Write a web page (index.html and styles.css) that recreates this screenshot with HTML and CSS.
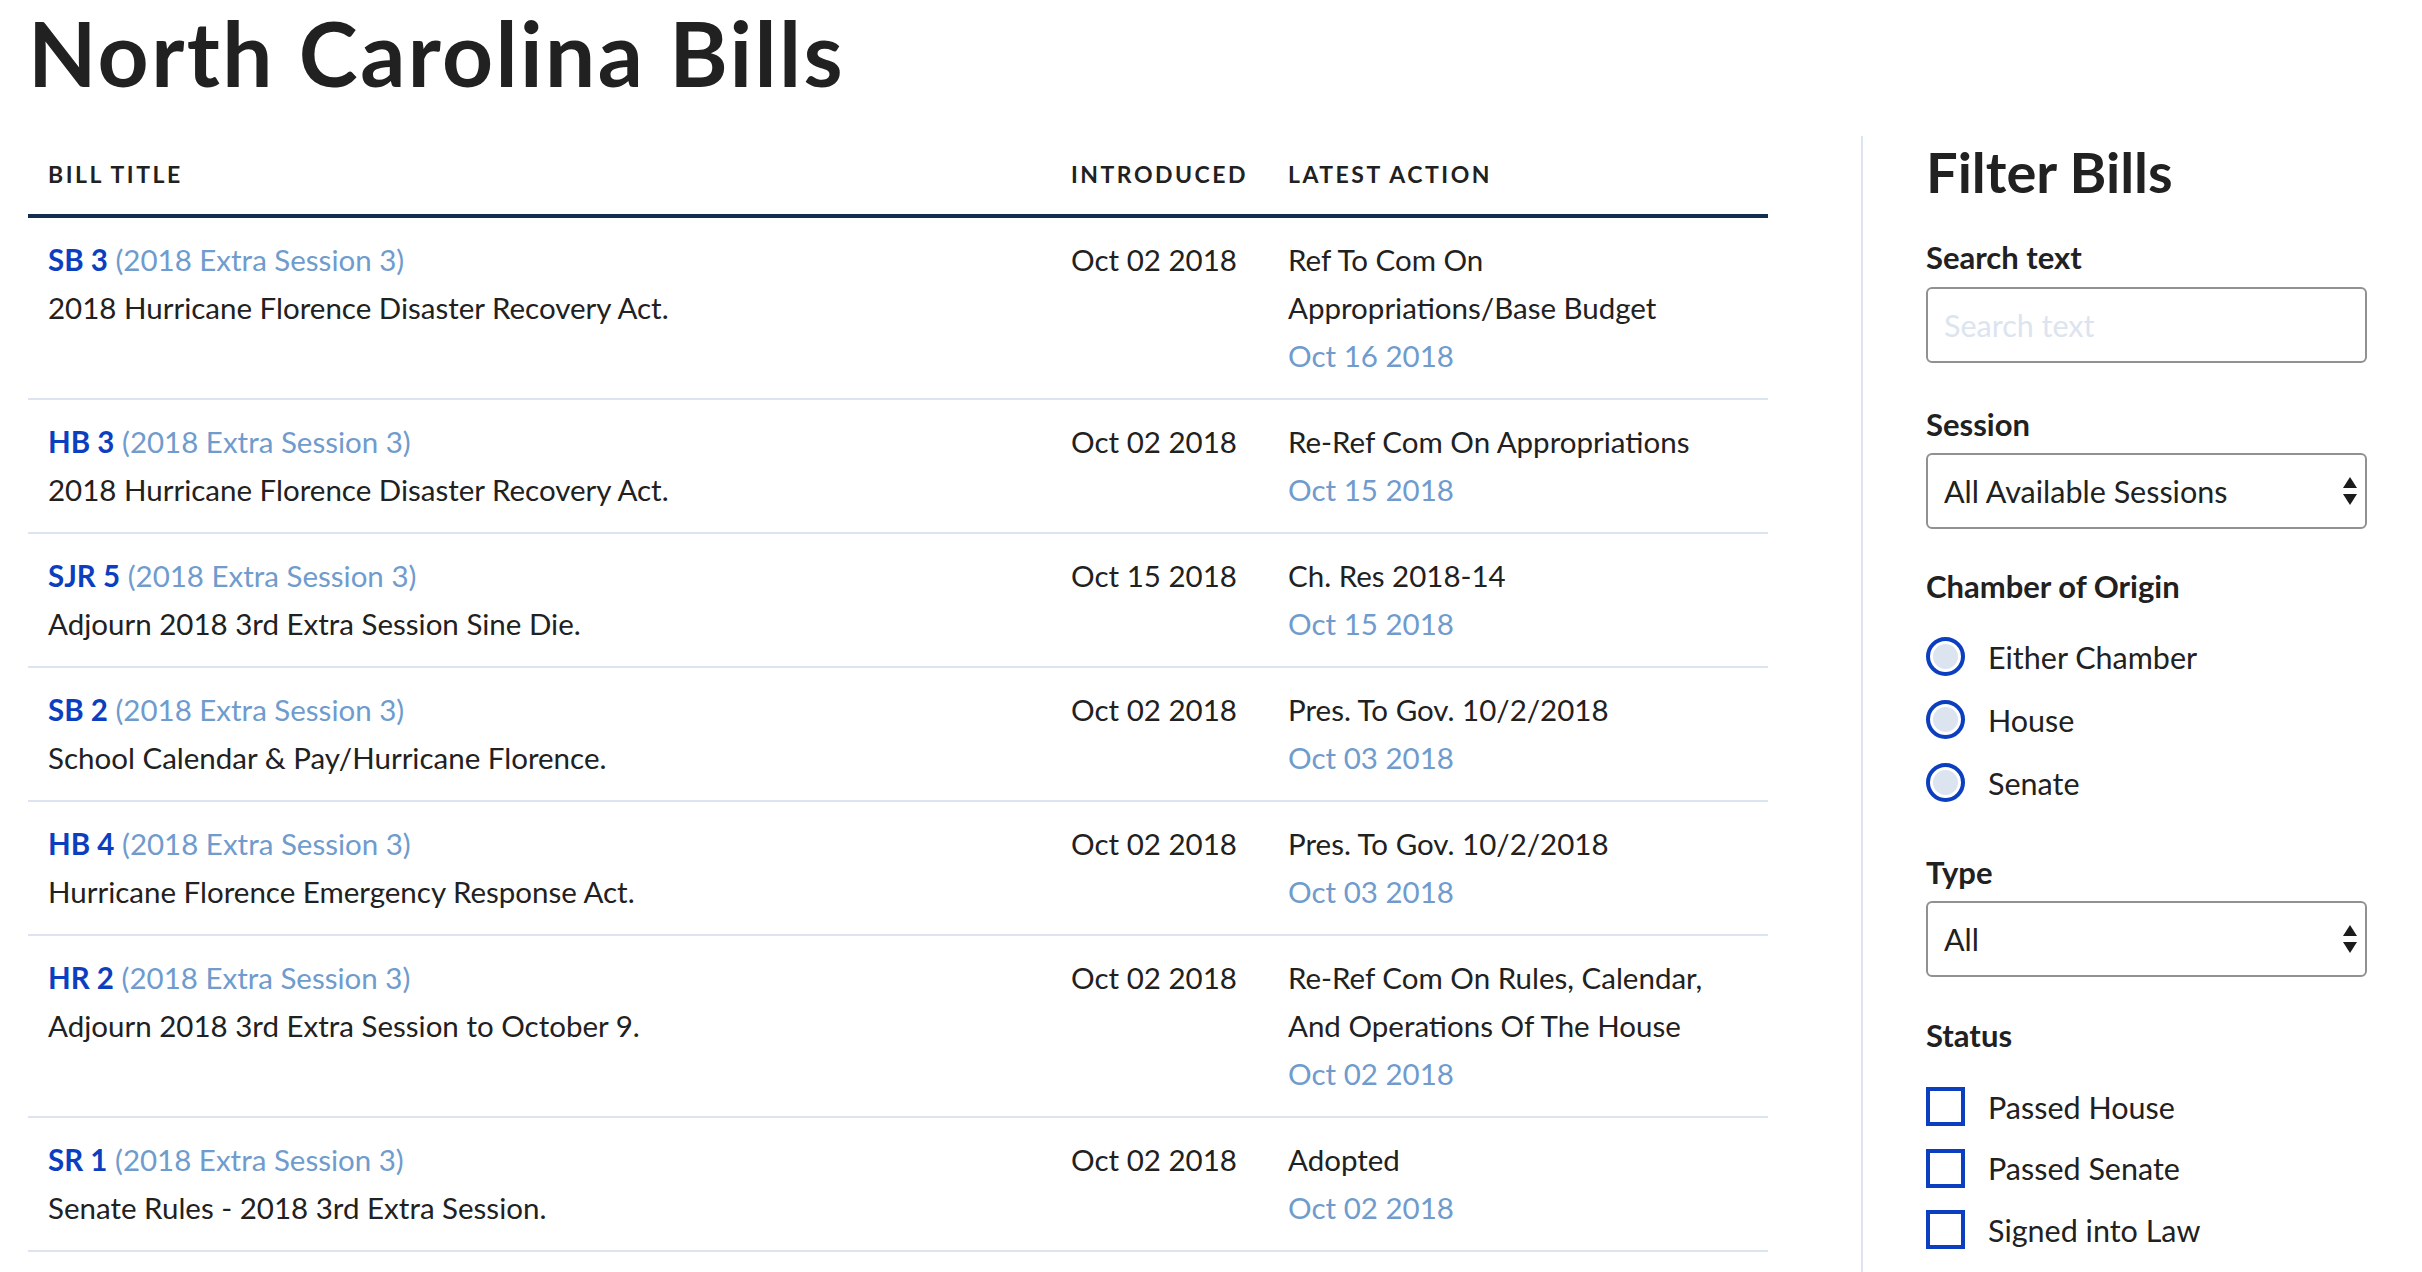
FILE: index.html
```html
<!DOCTYPE html>
<html lang="en">
<head>
<meta charset="utf-8">
<title>North Carolina Bills</title>
<link rel="stylesheet" href="styles.css">
</head>
<body>
<div class="page">
  <h1 class="page-title">North Carolina Bills</h1>
  <div class="layout">
    <main class="bills">
      <table class="bill-table">
        <colgroup>
          <col class="col-title">
          <col class="col-intro">
          <col class="col-action">
        </colgroup>
        <thead>
          <tr><th>Bill Title</th><th>Introduced</th><th>Latest Action</th></tr>
        </thead>
        <tbody>
          <tr>
            <td><div><a class="bill-num" href="#">SB 3</a> <span class="session">(2018 Extra Session 3)</span></div><div>2018 Hurricane Florence Disaster Recovery Act.</div></td>
            <td>Oct 02 2018</td>
            <td><div>Ref To Com On Appropriations/Base Budget</div><div class="action-date">Oct 16 2018</div></td>
          </tr>
          <tr>
            <td><div><a class="bill-num" href="#">HB 3</a> <span class="session">(2018 Extra Session 3)</span></div><div>2018 Hurricane Florence Disaster Recovery Act.</div></td>
            <td>Oct 02 2018</td>
            <td><div>Re-Ref Com On Appropriations</div><div class="action-date">Oct 15 2018</div></td>
          </tr>
          <tr>
            <td><div><a class="bill-num" href="#">SJR 5</a> <span class="session">(2018 Extra Session 3)</span></div><div>Adjourn 2018 3rd Extra Session Sine Die.</div></td>
            <td>Oct 15 2018</td>
            <td><div>Ch. Res 2018-14</div><div class="action-date">Oct 15 2018</div></td>
          </tr>
          <tr>
            <td><div><a class="bill-num" href="#">SB 2</a> <span class="session">(2018 Extra Session 3)</span></div><div>School Calendar &amp; Pay/Hurricane Florence.</div></td>
            <td>Oct 02 2018</td>
            <td><div>Pres. To Gov. 10/2/2018</div><div class="action-date">Oct 03 2018</div></td>
          </tr>
          <tr>
            <td><div><a class="bill-num" href="#">HB 4</a> <span class="session">(2018 Extra Session 3)</span></div><div>Hurricane Florence Emergency Response Act.</div></td>
            <td>Oct 02 2018</td>
            <td><div>Pres. To Gov. 10/2/2018</div><div class="action-date">Oct 03 2018</div></td>
          </tr>
          <tr>
            <td><div><a class="bill-num" href="#">HR 2</a> <span class="session">(2018 Extra Session 3)</span></div><div>Adjourn 2018 3rd Extra Session to October 9.</div></td>
            <td>Oct 02 2018</td>
            <td><div>Re-Ref Com On Rules, Calendar, And Operations Of The House</div><div class="action-date">Oct 02 2018</div></td>
          </tr>
          <tr>
            <td><div><a class="bill-num" href="#">SR 1</a> <span class="session">(2018 Extra Session 3)</span></div><div>Senate Rules - 2018 3rd Extra Session.</div></td>
            <td>Oct 02 2018</td>
            <td><div>Adopted</div><div class="action-date">Oct 02 2018</div></td>
          </tr>
        </tbody>
      </table>
    </main>

    <aside class="filters">
      <h2 class="filters-title">Filter Bills</h2>

      <div class="field field-search">
        <label class="field-label" for="q">Search text</label>
        <input class="text-input" id="q" type="text" placeholder="Search text">
      </div>

      <div class="field field-session">
        <label class="field-label" for="session">Session</label>
        <div class="select-wrap">
          <select class="select" id="session"><option>All Available Sessions</option></select>
          <svg class="select-arrows" width="14" height="28" viewBox="0 0 14 28" aria-hidden="true">
            <polygon points="7,0 14,11 0,11" fill="#1b1b1b"/>
            <polygon points="0,17 14,17 7,28" fill="#1b1b1b"/>
          </svg>
        </div>
      </div>

      <div class="field field-chamber" role="group" aria-labelledby="chamber-label">
        <div class="field-label group-label" id="chamber-label">Chamber of Origin</div>
        <label class="option"><input class="radio" type="radio" name="chamber"><span>Either Chamber</span></label>
        <label class="option"><input class="radio" type="radio" name="chamber"><span>House</span></label>
        <label class="option"><input class="radio" type="radio" name="chamber"><span>Senate</span></label>
      </div>

      <div class="field field-type">
        <label class="field-label" for="type">Type</label>
        <div class="select-wrap">
          <select class="select" id="type"><option>All</option></select>
          <svg class="select-arrows" width="14" height="28" viewBox="0 0 14 28" aria-hidden="true">
            <polygon points="7,0 14,11 0,11" fill="#1b1b1b"/>
            <polygon points="0,17 14,17 7,28" fill="#1b1b1b"/>
          </svg>
        </div>
      </div>

      <div class="field field-status" role="group" aria-labelledby="status-label">
        <div class="field-label group-label status-label" id="status-label">Status</div>
        <label class="option option-check"><input class="checkbox" type="checkbox"><span>Passed House</span></label>
        <label class="option option-check"><input class="checkbox" type="checkbox"><span>Passed Senate</span></label>
        <label class="option option-check"><input class="checkbox" type="checkbox"><span>Signed into Law</span></label>
      </div>
    </aside>
  </div>
</div>
</body>
</html>
```
FILE: styles.css
```css
* { box-sizing: border-box; }

html, body {
  margin: 0;
  padding: 0;
  background: #ffffff;
}

body {
  font-family: "Lato", "Source Sans Pro", "Open Sans", sans-serif;
  color: #212121;
  font-size: 29.5px;
}

.page {
  padding-left: 28px;
}

.page-title {
  margin: 0 0 30px 0;
  padding-top: 0;
  font-size: 89px;
  line-height: 106px;
  font-weight: 700;
  color: #212121;
  letter-spacing: 2.4px;
}

.layout {
  display: flex;
  align-items: stretch;
  gap: 93px;
}

.bills {
  width: 1740px;
  flex: 0 0 1740px;
}

.bill-table {
  width: 1740px;
  table-layout: fixed;
  border-collapse: collapse;
}

.col-title { width: 1023px; }
.col-intro { width: 217px; }
.col-action { width: 500px; }

.bill-table th {
  text-align: left;
  text-transform: uppercase;
  font-size: 23px;
  font-weight: 700;
  letter-spacing: 2.5px;
  line-height: 33px;
  padding: 22px 20px 23px 20px;
  border-bottom: 4px solid #112e51;
  color: #212121;
}

.bill-table td {
  vertical-align: top;
  padding: 18px 30px 18px 20px;
  line-height: 48px;
  font-size: 29.5px;
  border-bottom: 2px solid #dce4ef;
  color: #212121;
}

.bill-num {
  color: #0c3fc0;
  font-weight: 700;
  text-decoration: none;
}

.session {
  color: #6f9bcd;
}

.action-date {
  color: #6f9bcd;
}

/* Sidebar */
.filters {
  flex: 0 0 506px;
  width: 506px;
  border-left: 2px solid #dce4ef;
  padding: 5px 0 40px 63px;
}

.filters-title {
  margin: 0 0 37px 0;
  font-size: 56px;
  line-height: 62px;
  font-weight: 700;
  color: #212121;
}

.field {
  margin: 0;
  padding: 0;
}

.field-label {
  display: block;
  font-size: 31px;
  line-height: 34px;
  font-weight: 700;
  color: #212121;
  margin: 0 0 13px 0;
  padding: 0;
}

.group-label {
  margin-bottom: 34px;
}

.status-label {
  margin-bottom: 35px;
}

.field-search { margin-bottom: 44px; }
.field-session { margin-bottom: 40px; }
.field-chamber { margin-bottom: 53px; }
.field-type { margin-bottom: 41px; }

.field-session .field-label,
.field-type .field-label { margin-bottom: 12px; }

.text-input,
.select {
  display: block;
  width: 441px;
  height: 76px;
  border: 2px solid #919191;
  border-radius: 6px;
  padding: 0 40px 0 16px;
  font-family: inherit;
  font-size: 30.5px;
  color: #212121;
  background: #ffffff;
  outline: none;
  margin: 0;
}

.text-input::placeholder {
  color: #dce4ef;
  opacity: 1;
}

.select {
  -webkit-appearance: none;
  appearance: none;
}

.select-wrap {
  position: relative;
  width: 441px;
}

.select-arrows {
  position: absolute;
  right: 10px;
  top: 24px;
  pointer-events: none;
}

.option {
  display: flex;
  align-items: center;
  gap: 23px;
  height: 39px;
  margin-bottom: 24px;
  font-size: 30.5px;
  color: #212121;
}

.option:last-child { margin-bottom: 0; }

.option-check { margin-bottom: 22.5px; }

.radio,
.checkbox {
  -webkit-appearance: none;
  appearance: none;
  margin: 0;
  flex: 0 0 39px;
  width: 39px;
  height: 39px;
  border: 4px solid #0c3fc0;
}

.radio {
  border-radius: 50%;
  background: #dce4ef;
  box-shadow: inset 0 0 0 3px #ffffff;
}

.checkbox {
  border-radius: 0;
  background: #ffffff;
}
```
